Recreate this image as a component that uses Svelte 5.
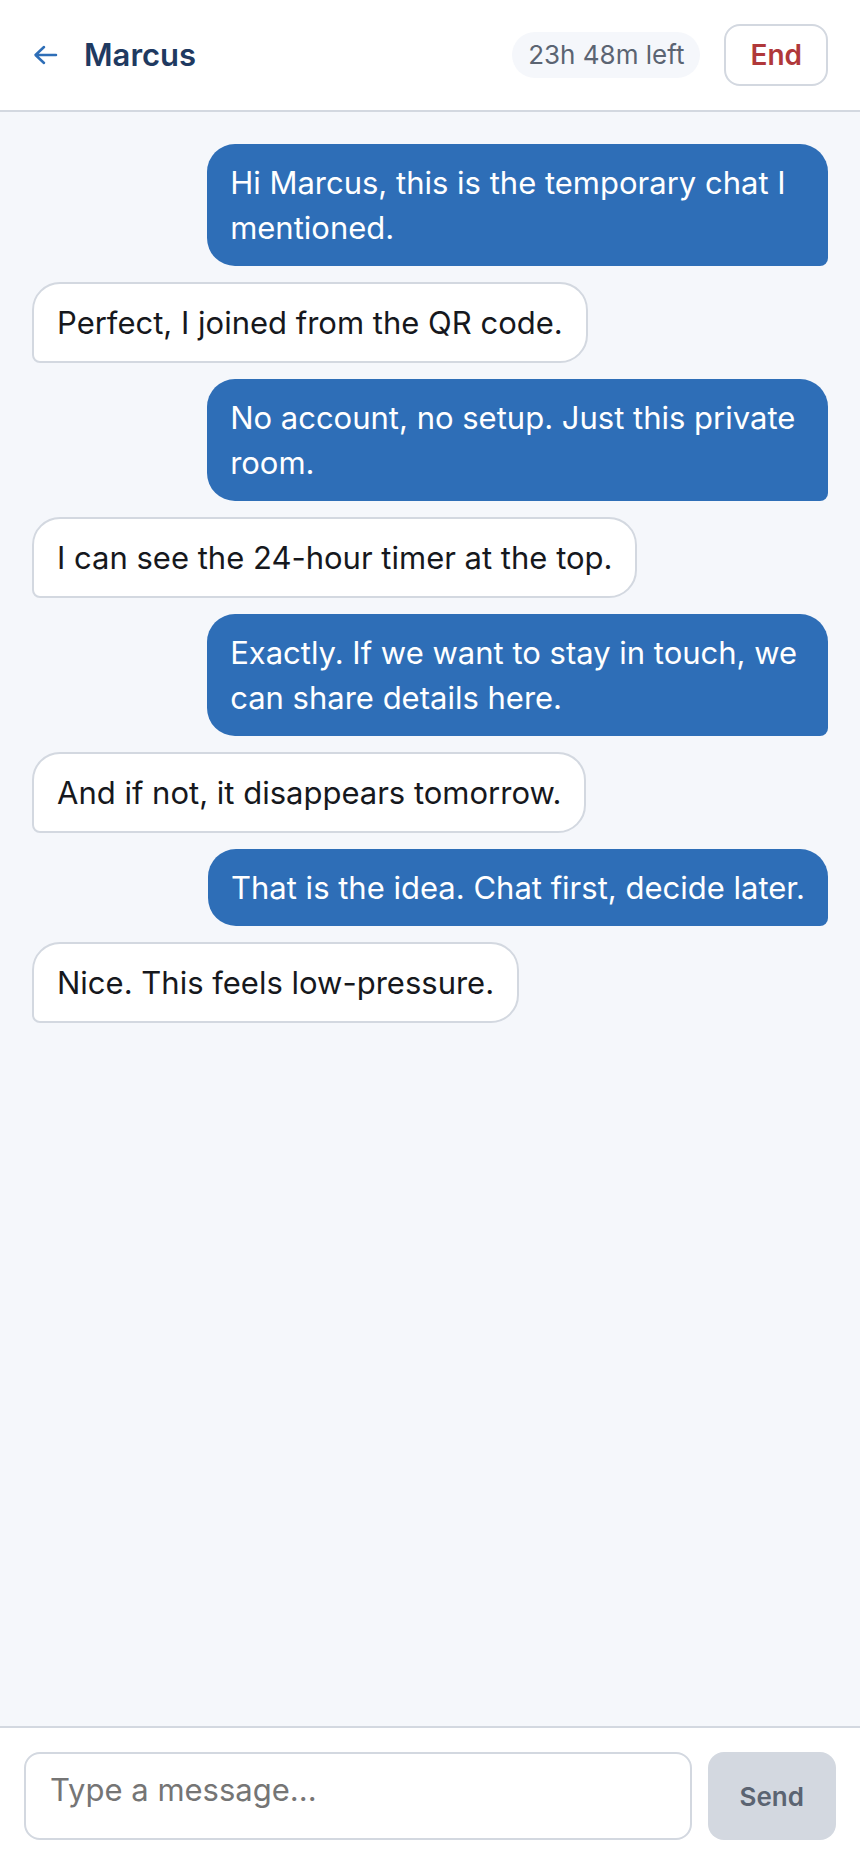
<script lang="ts">
  type Message = { id: number; mine: boolean; text: string };

  let peer = 'Marcus';
  let timeLeft = '23h 48m left';
  let draft = '';
  let messages: Message[] = [
    { id: 1, mine: true, text: 'Hi Marcus, this is the temporary chat I mentioned.' },
    { id: 2, mine: false, text: 'Perfect, I joined from the QR code.' },
    { id: 3, mine: true, text: 'No account, no setup. Just this private room.' },
    { id: 4, mine: false, text: 'I can see the 24-hour timer at the top.' },
    { id: 5, mine: true, text: 'Exactly. If we want to stay in touch, we can share details here.' },
    { id: 6, mine: false, text: 'And if not, it disappears tomorrow.' },
    { id: 7, mine: true, text: 'That is the idea. Chat first, decide later.' },
    { id: 8, mine: false, text: 'Nice. This feels low-pressure.' }
  ];

  $: canSend = draft.trim().length > 0;

  function send() {
    if (!canSend) return;
    messages = [...messages, { id: messages.length + 1, mine: true, text: draft.trim() }];
    draft = '';
  }
</script>

<div class="chat">
  <header class="topbar">
    <a class="back" href="#rooms" aria-label="Back">
      <svg width="28" height="28" viewBox="0 0 28 28" aria-hidden="true">
        <path d="M24 14H4M12 6l-8.500 8 8.500 8" />
      </svg>
    </a>
    <h1>{peer}</h1>
    <span class="timer">{timeLeft}</span>
    <button class="end" type="button">End</button>
  </header>

  <main class="messages">
    {#each messages as message (message.id)}
      <p class="bubble" class:mine={message.mine}>{message.text}</p>
    {/each}
  </main>

  <form class="composer" on:submit|preventDefault={send}>
    <textarea rows="1" aria-label="Message" placeholder="Type a message..." bind:value={draft}
    ></textarea>
    <button class="send" type="submit" disabled={!canSend}>Send</button>
  </form>
</div>

<style>
  :global(body) {
    margin: 0;
  }

  .chat {
    display: flex;
    flex-direction: column;
    min-height: 100vh;
    background: #f5f7fb;
    color: #16181d;
    font-family: Inter, 'Liberation Sans', sans-serif;
  }

  .chat * {
    box-sizing: border-box;
  }

  .topbar {
    display: flex;
    align-items: center;
    gap: 24px;
    padding: 24px 32px;
    background: #fff;
    border-bottom: 2px solid #d3d8e0;
  }

  .back {
    display: flex;
  }

  .back svg {
    fill: none;
    stroke: #2e6eb7;
    stroke-width: 2.5;
    stroke-linecap: round;
    stroke-linejoin: round;
  }

  h1 {
    flex: 1;
    margin: 0;
    color: #1f3a61;
    font-size: 31px;
    font-weight: 600;
    line-height: 40px;
  }

  .timer {
    padding: 8px 16px;
    border-radius: 24px;
    background: #f5f7fb;
    color: #5b6472;
    font-size: 26px;
    line-height: 30px;
  }

  button {
    border-radius: 16px;
    font-family: inherit;
    font-weight: 600;
  }

  .end {
    padding: 12px 24px;
    border: 2px solid #d3d8e0;
    background: #fff;
    color: #b0383a;
    font-size: 28px;
    line-height: 34px;
  }

  .messages {
    display: flex;
    flex: 1;
    flex-direction: column;
    align-items: flex-start;
    gap: 16px;
    padding: 32px;
  }

  .bubble {
    max-width: 78%;
    margin: 0;
    padding: 16px 23px;
    border: 2px solid #d3d8e0;
    border-radius: 28px 28px 28px 8px;
    background: #fff;
    font-size: 31px;
    line-height: 45px;
    overflow-wrap: anywhere;
  }

  .bubble.mine {
    align-self: flex-end;
    border: none;
    border-radius: 28px 28px 8px 28px;
    background: #2e6eb7;
    color: #fff;
  }

  .composer {
    display: flex;
    gap: 16px;
    padding: 24px;
    background: #fff;
    border-top: 2px solid #d3d8e0;
  }

  textarea {
    flex: 1;
    min-width: 0;
    height: 88px;
    padding: 16px 24px;
    border: 2px solid #d3d8e0;
    border-radius: 16px;
    background: #fff;
    color: inherit;
    font-family: inherit;
    font-size: 31px;
    line-height: 40px;
    resize: none;
  }

  textarea::placeholder {
    color: #757575;
  }

  .send {
    padding: 0 32px;
    border: none;
    background: #2e6eb7;
    color: #fff;
    font-size: 26px;
  }

  .send:disabled {
    background: #d3d8e0;
    color: #5b6472;
  }
</style>
